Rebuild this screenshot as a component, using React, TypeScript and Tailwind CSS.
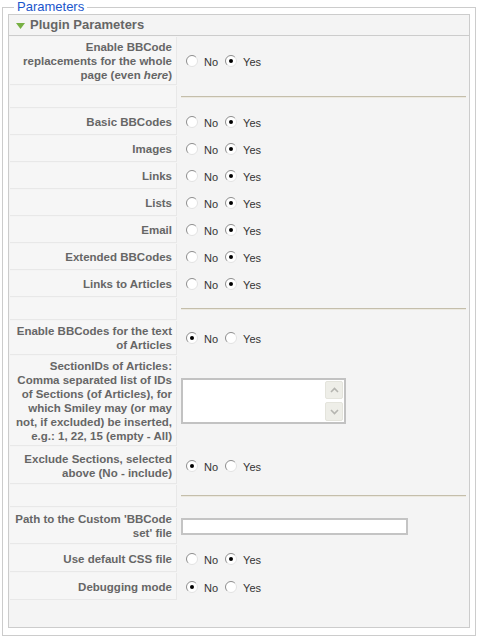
import React from 'react';

type Row =
  | { kind: 'radio'; label: React.ReactNode; yes: boolean; h?: string }
  | { kind: 'spacer' }
  | { kind: 'textarea'; label: React.ReactNode; h?: string }
  | { kind: 'input'; label: React.ReactNode; h?: string };

function Radio({ checked }: { checked: boolean }) {
  return (
    <svg width="12" height="12" viewBox="0 0 12 12" className="shrink-0">
      <circle cx="6" cy="6" r="5.5" fill="#fff" />
      <path d="M2.11 9.89 A5.5 5.5 0 0 1 9.89 2.11" stroke="#8c8c8c" strokeWidth="1" fill="none" />
      <path d="M9.89 2.11 A5.5 5.5 0 0 1 2.11 9.89" stroke="#e2e2e2" strokeWidth="1" fill="none" />
      {checked && <circle cx="6" cy="6" r="2" fill="#000" />}
    </svg>
  );
}

function YesNo({ yes }: { yes: boolean }) {
  return (
    <div className="flex items-center pl-[8px] text-[11px] text-[#333]">
      <Radio checked={!yes} />
      <span className="ml-[6px] pt-[3px]">No</span>
      <span className="ml-[7px]">
        <Radio checked={yes} />
      </span>
      <span className="ml-[6px] pt-[3px]">Yes</span>
    </div>
  );
}

function TextBox() {
  return (
    <div className="ml-[3px] flex h-[46px] w-[165px] border-2 border-[#c2c2c2] bg-white">
      <div className="flex-1" />
      <div className="flex w-[19px] flex-col justify-between py-[1px] pr-[1px]">
        <div className="flex h-[18px] items-center justify-center rounded-[2px] border border-[#e4e4dc] bg-[#eeeee8]">
          <svg width="9" height="6" viewBox="0 0 9 6">
            <path d="M1 5 L4.5 1.5 L8 5" stroke="#b5b5b0" strokeWidth="1.6" fill="none" />
          </svg>
        </div>
        <div className="flex h-[19px] items-center justify-center rounded-[2px] border border-[#e4e4dc] bg-[#eeeee8]">
          <svg width="9" height="6" viewBox="0 0 9 6">
            <path d="M1 1 L4.5 4.5 L8 1" stroke="#b5b5b0" strokeWidth="1.6" fill="none" />
          </svg>
        </div>
      </div>
    </div>
  );
}

const rows: Row[] = [
  {
    kind: 'radio',
    yes: true,
    label: (
      <>
        Enable BBCode
        <br />
        replacements for the whole
        <br />
        page (even <i>here</i>)
      </>
    ),
  },
  { kind: 'spacer' },
  { kind: 'radio', yes: true, label: 'Basic BBCodes' },
  { kind: 'radio', yes: true, label: 'Images' },
  { kind: 'radio', yes: true, label: 'Links' },
  { kind: 'radio', yes: true, label: 'Lists' },
  { kind: 'radio', yes: true, label: 'Email' },
  { kind: 'radio', yes: true, label: 'Extended BBCodes' },
  { kind: 'radio', yes: true, label: 'Links to Articles' },
  { kind: 'spacer' },
  {
    kind: 'radio',
    yes: false,
    label: (
      <>
        Enable BBCodes for the text
        <br />
        of Articles
      </>
    ),
  },
  {
    kind: 'textarea',
    label: (
      <>
        SectionIDs of Articles:
        <br />
        Comma separated list of IDs
        <br />
        of Sections (of Articles), for
        <br />
        which Smiley may (or may
        <br />
        not, if excluded) be inserted,
        <br />
        e.g.: 1, 22, 15 (empty - All)
      </>
    ),
  },
  {
    kind: 'radio',
    yes: false,
    h: 'min-h-[37px]',
    label: (
      <>
        Exclude Sections, selected
        <br />
        above (No - include)
      </>
    ),
  },
  { kind: 'spacer' },
  {
    kind: 'input',
    h: 'min-h-[36px]',
    label: (
      <>
        Path to the Custom 'BBCode
        <br />
        set' file
      </>
    ),
  },
  { kind: 'radio', yes: true, h: 'min-h-[27px]', label: 'Use default CSS file' },
  { kind: 'radio', yes: false, h: 'min-h-[27px]', label: 'Debugging mode' },
];

export default function App() {
  return (
    <div className="h-[639px] w-[478px] bg-white pt-[1px] font-['Liberation_Sans',Arial,sans-serif]">
      <fieldset className="mx-[2px] h-[635px] border border-[#cccccc] px-[5px]">
        <legend className="ml-[6px] px-[3px] text-[13px] leading-[12px] text-[#1a56cc]">Parameters</legend>
        <div className="mt-[1px] h-[614px] border border-[#cccccc] bg-[#f4f4f4]">
          <div className="flex h-[21px] items-center border-b border-[#cccccc] pl-[7px]">
            <svg width="9" height="6" viewBox="0 0 9 6" className="mt-[1px]">
              <path d="M0 0 H9 L4.5 6 Z" fill="#77b043" />
            </svg>
            <span className="ml-[5px] text-[13px] font-bold text-[#666]">Plugin Parameters</span>
          </div>

          <div className="flex flex-col gap-[1px] p-[1px]">
            {rows.map((row, i) => (
              <div key={i} className="flex gap-[1px]">
                {row.kind === 'spacer' ? (
                  <div className="h-[22px] w-[167px] shrink-0 border-r border-b border-[#e8e8e8] bg-[#f6f6f6]" />
                ) : (
                  <div
                    className={`flex ${row.h ?? 'min-h-[26px]'} w-[167px] shrink-0 items-center justify-end border-r border-b border-[#e8e8e8] bg-[#f6f6f6] pt-[3px] pb-[2px] pr-[4px]`}
                  >
                    <div className="text-right text-[11.5px] font-bold leading-[14px] whitespace-nowrap text-[#666]">
                      {row.label}
                    </div>
                  </div>
                )}
                <div className="flex flex-1 items-center">
                  {row.kind === 'spacer' && (
                    <div className="ml-[3px] mr-[2px] h-[2px] flex-1 border-t border-b border-t-[#c4beab] border-b-[#ece9e0]" />
                  )}
                  {row.kind === 'radio' && <YesNo yes={row.yes} />}
                  {row.kind === 'textarea' && <TextBox />}
                  {row.kind === 'input' && (
                    <div className="ml-[3px] h-[17px] w-[227px] border-2 border-[#c4c4c4] bg-white" />
                  )}
                </div>
              </div>
            ))}
          </div>
        </div>
      </fieldset>
    </div>
  );
}
